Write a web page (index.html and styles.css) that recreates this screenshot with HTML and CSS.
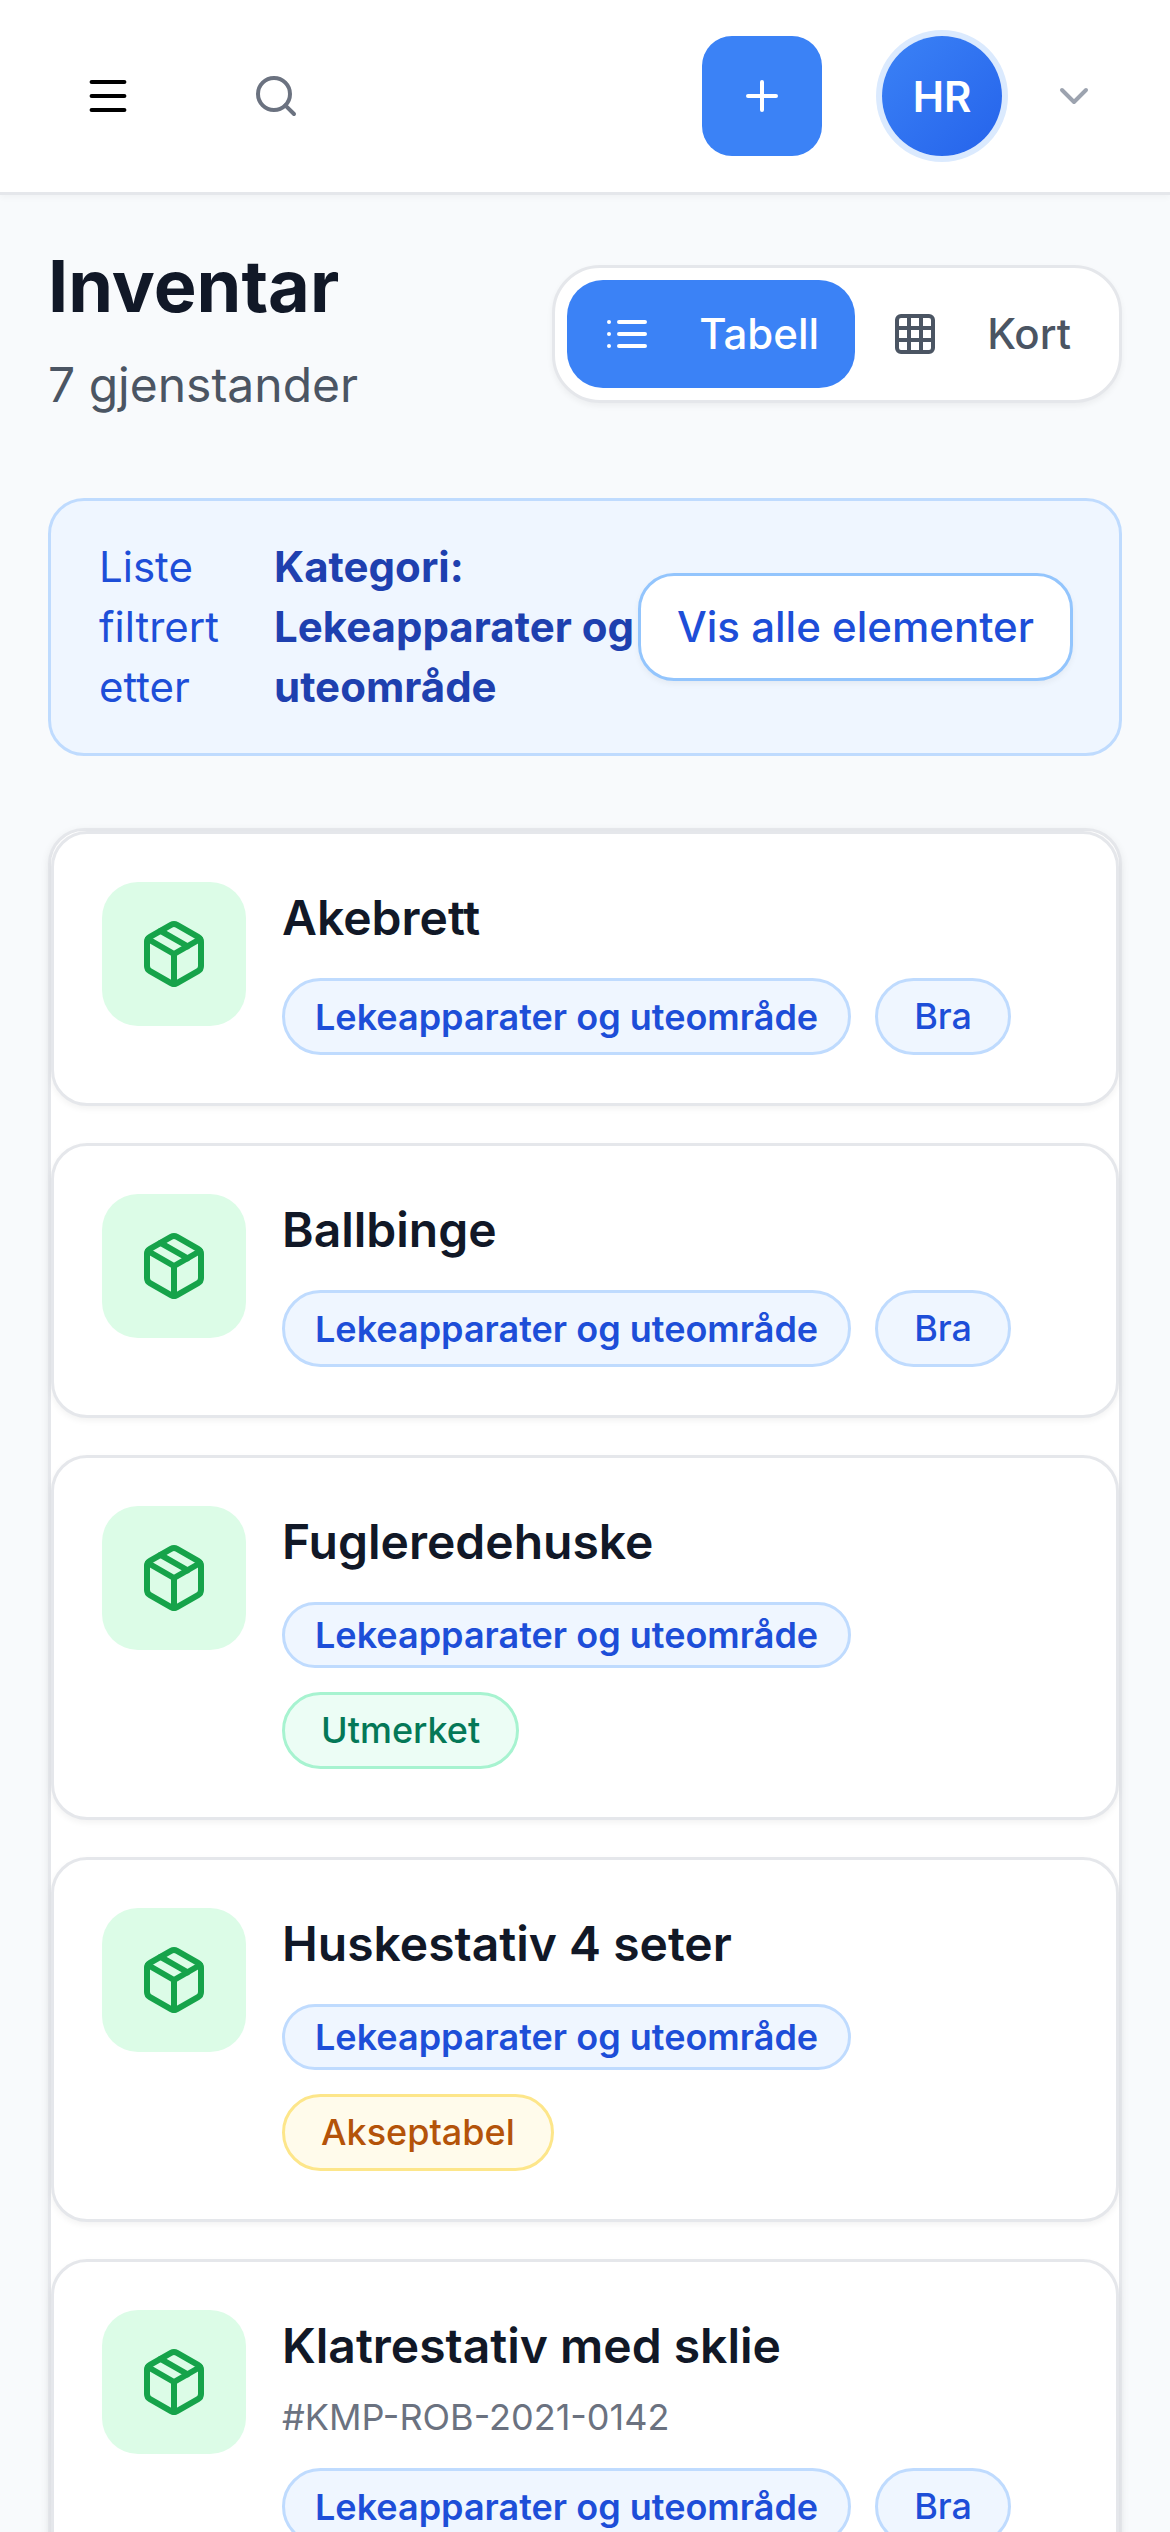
FILE: index.html
```html
<!DOCTYPE html>
<html lang="no">
<head>
    <meta charset="UTF-8">
    <meta name="viewport" content="width=device-width, initial-scale=1.0">
    <title>Inventar</title>
    <link rel="stylesheet" href="styles.css">
</head>
<body>
    <div class="topbar">
        <div class="topbar-left">
            <svg class="menu-icon" viewBox="0 0 24 24" fill="none" stroke="currentColor" stroke-width="1.8" stroke-linecap="round"><path d="M5 6h14M5 12h14M5 18h14"/></svg>
            <svg class="search-icon" viewBox="0 0 24 24" fill="none" stroke="currentColor" stroke-width="2" stroke-linecap="round"><circle cx="11" cy="11" r="8"/><path d="m21 21-4.35-4.35"/></svg>
        </div>
        <div class="topbar-right">
            <div class="add-btn">
                <svg viewBox="0 0 24 24" fill="none" stroke="currentColor" stroke-width="2" stroke-linecap="round"><path d="M5 12h14M12 5v14"/></svg>
            </div>
            <div class="avatar">HR</div>
            <svg class="chevron" viewBox="0 0 24 24" fill="none" stroke="currentColor" stroke-width="2" stroke-linecap="round" stroke-linejoin="round"><path d="m6 9 6 6 6-6"/></svg>
        </div>
    </div>

    <div class="content">
        <div class="page-head">
            <div>
                <h1>Inventar</h1>
                <p class="count">7 gjenstander</p>
            </div>
            <div class="view-toggle">
                <div class="toggle-btn active">
                    <svg viewBox="0 0 24 24" fill="none" stroke="currentColor" stroke-width="2" stroke-linecap="round"><path d="M8 6h13M8 12h13M8 18h13M3 6h.01M3 12h.01M3 18h.01"/></svg>
                    <span>Tabell</span>
                </div>
                <div class="toggle-btn">
                    <svg viewBox="0 0 24 24" fill="none" stroke="currentColor" stroke-width="2" stroke-linecap="round" stroke-linejoin="round"><rect x="3" y="3" width="18" height="18" rx="2"/><path d="M3 9h18M3 15h18M9 3v18M15 3v18"/></svg>
                    <span>Kort</span>
                </div>
            </div>
        </div>

        <div class="filter-box">
            <div class="filter-text">
                <span class="filter-label">Liste filtrert etter</span>
                <strong class="filter-value">Kategori: Lekeapparater og uteområde</strong>
            </div>
            <div class="filter-btn">Vis alle elementer</div>
        </div>

        <div class="item-list">
            <div class="item-card">
                <div class="item-icon">
                    <svg viewBox="0 0 24 24" fill="none" stroke="currentColor" stroke-width="2" stroke-linecap="round" stroke-linejoin="round"><path d="M11 21.73a2 2 0 0 0 2 0l7-4A2 2 0 0 0 21 16V8a2 2 0 0 0-1-1.73l-7-4a2 2 0 0 0-2 0l-7 4A2 2 0 0 0 3 8v8a2 2 0 0 0 1 1.73z"/><path d="M12 22V12"/><path d="m3.3 7 8.7 5 8.7-5"/><path d="m7.5 4.27 9 5.15"/></svg>
                </div>
                <div class="item-body">
                    <h3>Akebrett</h3>
                    <div class="badges">
                        <span class="badge category">Lekeapparater og uteområde</span>
                        <span class="badge status good">Bra</span>
                    </div>
                </div>
            </div>

            <div class="item-card">
                <div class="item-icon">
                    <svg viewBox="0 0 24 24" fill="none" stroke="currentColor" stroke-width="2" stroke-linecap="round" stroke-linejoin="round"><path d="M11 21.73a2 2 0 0 0 2 0l7-4A2 2 0 0 0 21 16V8a2 2 0 0 0-1-1.73l-7-4a2 2 0 0 0-2 0l-7 4A2 2 0 0 0 3 8v8a2 2 0 0 0 1 1.73z"/><path d="M12 22V12"/><path d="m3.3 7 8.7 5 8.7-5"/><path d="m7.5 4.27 9 5.15"/></svg>
                </div>
                <div class="item-body">
                    <h3>Ballbinge</h3>
                    <div class="badges">
                        <span class="badge category">Lekeapparater og uteområde</span>
                        <span class="badge status good">Bra</span>
                    </div>
                </div>
            </div>

            <div class="item-card">
                <div class="item-icon">
                    <svg viewBox="0 0 24 24" fill="none" stroke="currentColor" stroke-width="2" stroke-linecap="round" stroke-linejoin="round"><path d="M11 21.73a2 2 0 0 0 2 0l7-4A2 2 0 0 0 21 16V8a2 2 0 0 0-1-1.73l-7-4a2 2 0 0 0-2 0l-7 4A2 2 0 0 0 3 8v8a2 2 0 0 0 1 1.73z"/><path d="M12 22V12"/><path d="m3.3 7 8.7 5 8.7-5"/><path d="m7.5 4.27 9 5.15"/></svg>
                </div>
                <div class="item-body">
                    <h3>Fugleredehuske</h3>
                    <div class="badges">
                        <span class="badge category">Lekeapparater og uteområde</span>
                        <span class="badge status excellent">Utmerket</span>
                    </div>
                </div>
            </div>

            <div class="item-card">
                <div class="item-icon">
                    <svg viewBox="0 0 24 24" fill="none" stroke="currentColor" stroke-width="2" stroke-linecap="round" stroke-linejoin="round"><path d="M11 21.73a2 2 0 0 0 2 0l7-4A2 2 0 0 0 21 16V8a2 2 0 0 0-1-1.73l-7-4a2 2 0 0 0-2 0l-7 4A2 2 0 0 0 3 8v8a2 2 0 0 0 1 1.73z"/><path d="M12 22V12"/><path d="m3.3 7 8.7 5 8.7-5"/><path d="m7.5 4.27 9 5.15"/></svg>
                </div>
                <div class="item-body">
                    <h3>Huskestativ 4 seter</h3>
                    <div class="badges">
                        <span class="badge category">Lekeapparater og uteområde</span>
                        <span class="badge status acceptable">Akseptabel</span>
                    </div>
                </div>
            </div>

            <div class="item-card">
                <div class="item-icon">
                    <svg viewBox="0 0 24 24" fill="none" stroke="currentColor" stroke-width="2" stroke-linecap="round" stroke-linejoin="round"><path d="M11 21.73a2 2 0 0 0 2 0l7-4A2 2 0 0 0 21 16V8a2 2 0 0 0-1-1.73l-7-4a2 2 0 0 0-2 0l-7 4A2 2 0 0 0 3 8v8a2 2 0 0 0 1 1.73z"/><path d="M12 22V12"/><path d="m3.3 7 8.7 5 8.7-5"/><path d="m7.5 4.27 9 5.15"/></svg>
                </div>
                <div class="item-body">
                    <h3>Klatrestativ med sklie</h3>
                    <p class="item-code">#KMP-ROB-2021-0142</p>
                    <div class="badges">
                        <span class="badge category">Lekeapparater og uteområde</span>
                        <span class="badge status good">Bra</span>
                    </div>
                </div>
            </div>
        </div>
    </div>
</body>
</html>
```

FILE: styles.css
```css
* {
    margin: 0;
    padding: 0;
    box-sizing: border-box;
}

html,
body {
    height: 2532px;
    overflow: hidden;
}

body {
    font-family: Inter, "Liberation Sans", sans-serif;
    background: #f8fafc;
    color: #111827;
}

.topbar {
    height: 195px;
    padding: 36px 72px 0 80px;
    background: white;
    border-bottom: 3px solid #e5e7eb;
    box-shadow: 0 3px 6px rgba(0,0,0,0.03);
    display: flex;
    justify-content: space-between;
}

.topbar-left {
    height: 120px;
    display: flex;
    align-items: center;
}

.menu-icon {
    width: 56px;
    height: 56px;
    color: #000;
}

.search-icon {
    width: 48px;
    height: 48px;
    margin-left: 116px;
    color: #6b7280;
}

.topbar-right {
    height: 120px;
    display: flex;
    align-items: center;
}

.add-btn {
    width: 120px;
    height: 120px;
    background: #3b82f6;
    border-radius: 30px;
    color: white;
    display: flex;
    align-items: center;
    justify-content: center;
}

.add-btn svg {
    width: 48px;
    height: 48px;
}

.avatar {
    width: 120px;
    height: 120px;
    margin-left: 60px;
    border-radius: 50%;
    background: linear-gradient(135deg, #3b82f6, #2563eb);
    box-shadow: 0 0 0 6px #dbeafe;
    color: white;
    font-size: 42px;
    font-weight: 600;
    display: flex;
    align-items: center;
    justify-content: center;
}

.chevron {
    width: 48px;
    height: 48px;
    margin-left: 48px;
    color: #9ca3af;
}

.content {
    padding: 48px 48px 0;
}

.page-head {
    display: flex;
    justify-content: space-between;
    align-items: center;
    margin-bottom: 77px;
}

.page-head h1 {
    font-size: 72px;
    line-height: 86px;
    font-weight: 700;
}

.count {
    margin-top: 20px;
    font-size: 48px;
    line-height: 72px;
    color: #4b5563;
}

.view-toggle {
    display: flex;
    margin-top: 3px;
    padding: 12px;
    background: white;
    border: 3px solid #e5e7eb;
    border-radius: 48px;
    box-shadow: 0 3px 6px rgba(0,0,0,0.05);
}

.toggle-btn {
    height: 108px;
    padding: 0 36px;
    border-radius: 36px;
    display: flex;
    align-items: center;
    gap: 48px;
    font-size: 42px;
    font-weight: 500;
    color: #4b5563;
}

.toggle-btn svg {
    width: 48px;
    height: 48px;
}

.toggle-btn.active {
    background: #3b82f6;
    color: white;
}

.filter-box {
    height: 258px;
    padding: 36px 48px;
    background: #eff6ff;
    border: 3px solid #bfdbfe;
    border-radius: 36px;
    display: flex;
    align-items: center;
    justify-content: space-between;
    margin-bottom: 72px;
}

.filter-text {
    display: flex;
    font-size: 42px;
    line-height: 60px;
}

.filter-label {
    width: 175px;
    color: #1d4ed8;
}

.filter-value {
    width: 364px;
    color: #1e40af;
    font-weight: 700;
}

.filter-btn {
    flex-shrink: 0;
    padding: 21px 36px;
    background: white;
    border: 3px solid #93c5fd;
    border-radius: 36px;
    color: #1d4ed8;
    font-size: 42px;
    line-height: 60px;
    font-weight: 500;
    white-space: nowrap;
    box-shadow: 0 3px 6px rgba(0,0,0,0.05);
}

.item-list {
    background: white;
    border: 3px solid #e5e7eb;
    border-radius: 36px;
    display: flex;
    flex-direction: column;
    gap: 37px;
    box-shadow: 0 3px 9px rgba(0,0,0,0.08);
}

.item-card {
    padding: 48px;
    background: white;
    border: 3px solid #e5e7eb;
    border-radius: 36px;
    display: flex;
    gap: 36px;
    box-shadow: 0 3px 6px rgba(0,0,0,0.05);
}

.item-icon {
    width: 144px;
    height: 144px;
    flex-shrink: 0;
    background: #dcfce7;
    border-radius: 36px;
    color: #16a34a;
    display: flex;
    align-items: center;
    justify-content: center;
}

.item-icon svg {
    width: 72px;
    height: 72px;
}

.item-body {
    flex: 1;
    min-width: 0;
}

.item-body h3 {
    font-size: 48px;
    line-height: 72px;
    font-weight: 600;
    color: #111827;
}

.item-code {
    margin-top: 8px;
    font-size: 36px;
    line-height: 54px;
    color: #6b7280;
}

.badges {
    margin-top: 24px;
    display: flex;
    flex-wrap: wrap;
    gap: 24px;
}

.badge {
    border: 3px solid;
    border-radius: 48px;
    display: flex;
    align-items: center;
}

.badge.category {
    padding: 3px 30px;
    font-size: 36px;
    line-height: 54px;
    font-weight: 600;
    color: #1d4ed8;
    background: #eff6ff;
    border-color: #bfdbfe;
}

.badge.status {
    padding: 6px 36px;
    font-size: 36px;
    line-height: 59px;
    font-weight: 500;
}

.status.good {
    color: #1d4ed8;
    background: #eff6ff;
    border-color: #bfdbfe;
}

.status.excellent {
    color: #047857;
    background: #ecfdf5;
    border-color: #a7f3d0;
}

.status.acceptable {
    color: #b45309;
    background: #fffbeb;
    border-color: #fde68a;
}
```
